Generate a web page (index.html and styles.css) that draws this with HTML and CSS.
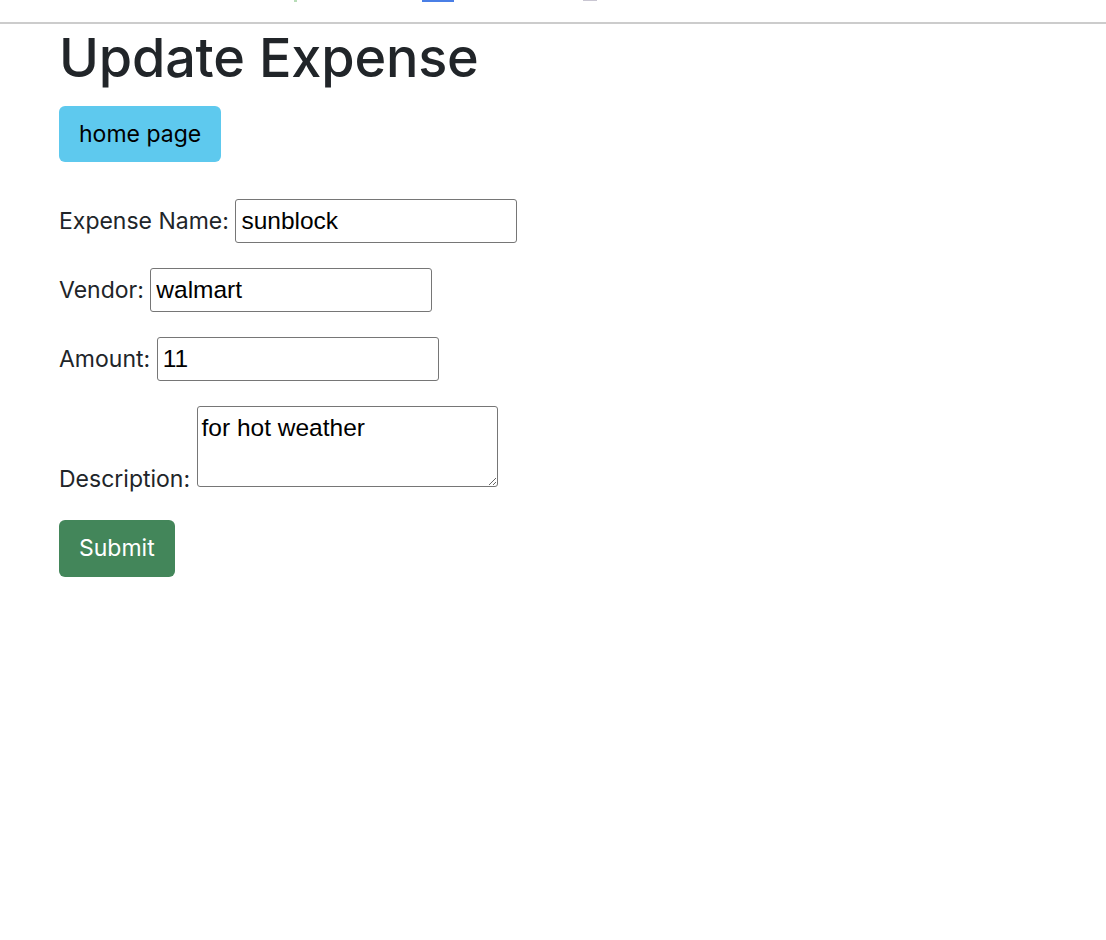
FILE: index.html
```html
<!DOCTYPE html>
<html lang="en">
<head>
<meta charset="utf-8">
<title>Update Expense</title>
<link rel="stylesheet" href="styles.css">
</head>
<body>
<div class="topbar">
  <span class="mark mark-green"></span>
  <span class="mark mark-blue"></span>
  <span class="mark mark-gray"></span>
</div>
<main class="container">
  <h1 class="title">Update Expense</h1>
  <div class="nav-row">
    <a class="btn btn-info" href="#">home page</a>
  </div>
  <form class="expense-form">
    <p class="row"><label class="lbl" for="name">Expense Name:</label> <input class="field" id="name" type="text" value="sunblock"></p>
    <p class="row"><label class="lbl" for="vendor">Vendor:</label> <input class="field" id="vendor" type="text" value="walmart"></p>
    <p class="row"><label class="lbl" for="amount">Amount:</label> <input class="field" id="amount" type="text" value="11"></p>
    <p class="row row-last"><label class="lbl" for="desc">Description:</label> <textarea class="area" id="desc">for hot weather</textarea></p>
    <button class="btn btn-success" type="submit">Submit</button>
  </form>
</main>
</body>
</html>
```

FILE: styles.css
```css
* { box-sizing: border-box; }

html, body {
  margin: 0;
  padding: 0;
  background: #ffffff;
}

body {
  font-family: Inter, "Liberation Sans", sans-serif;
  color: #212529;
}

.topbar {
  height: 24px;
  border-bottom: 2px solid #cccccc;
  display: flex;
  align-items: flex-start;
}

.mark { display: block; }
.mark-green { margin-left: 294px; width: 3px; height: 2px; background: #b8ddb8; }
.mark-blue { margin-left: 125px; width: 32px; height: 2px; background: #4a7fe6; }
.mark-gray { margin-left: 129px; width: 14px; height: 1px; background: #c9c6d2; }

.container {
  padding-left: 59px;
}

.title {
  margin: 2px 0 16px;
  font-size: 54px;
  font-weight: 500;
  line-height: 64px;
  letter-spacing: -0.2px;
}

.nav-row {
  margin-bottom: 37px;
}

.btn {
  display: inline-block;
  font-family: Inter, "Liberation Sans", sans-serif;
  font-size: 23px;
  line-height: 36px;
  padding: 10px 20px;
  border: 0;
  border-radius: 6px;
  text-decoration: none;
  cursor: pointer;
}

.btn-info {
  background: #5ec9ee;
  color: #000000;
}

.btn-success {
  background: #43865a;
  color: #ffffff;
  padding: 10px 20px 11px;
}

.expense-form { margin: 0; }

.row {
  margin: 0 0 25px;
  font-size: 23px;
  line-height: 36px;
}

.row-last {
  margin-bottom: 23px;
}

.lbl { color: #212529; }

.field {
  width: 282px;
  height: 44px;
  border: 1px solid #767676;
  border-radius: 3px;
  padding: 0 5px;
  font-family: "Liberation Sans", Arial, sans-serif;
  font-size: 24.5px;
  color: #000000;
  background: #ffffff;
}

.area {
  width: 301px;
  height: 81px;
  border: 1px solid #767676;
  border-radius: 3px;
  padding: 7px 4px 3px;
  font-family: "Liberation Sans", Arial, sans-serif;
  font-size: 24.5px;
  line-height: 28px;
  color: #000000;
  vertical-align: baseline;
  resize: both;
}
```
